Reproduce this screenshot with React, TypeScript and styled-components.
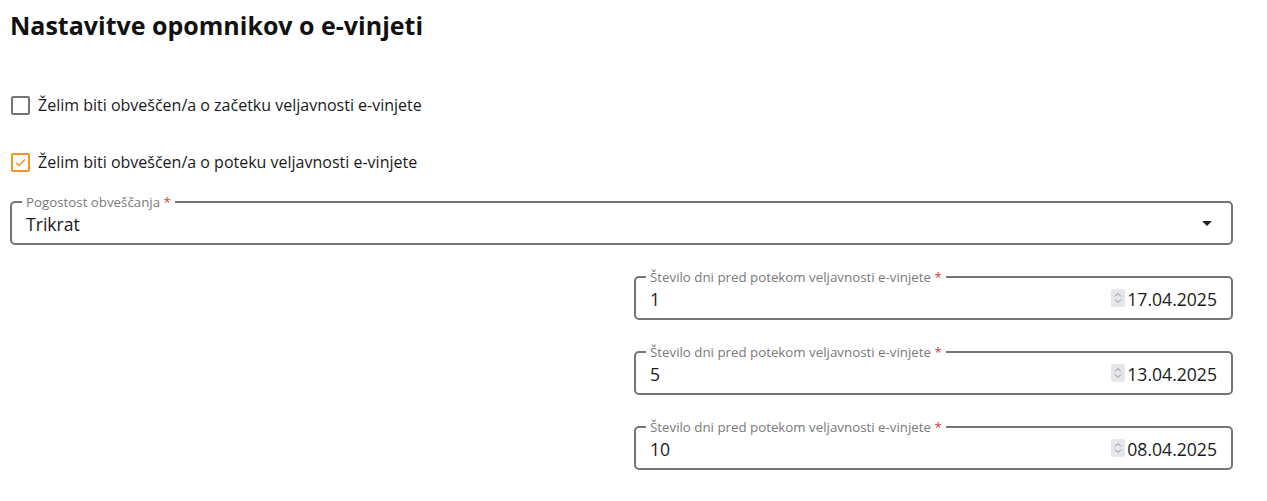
import React from 'react';
import styled, { createGlobalStyle } from 'styled-components';

const GlobalStyle = createGlobalStyle`
	html, body {
		margin: 0;
		padding: 0;
		background: #ffffff;
		font-family: 'Open Sans', 'Noto Sans', sans-serif;
		color: #1a1a1a;
	}
`;

const Page = styled.div`
	width: 1223px;
	padding: 8px 34px 20px 10px;
	display: flex;
	flex-direction: column;
`;

const Title = styled.h1`
	margin: 0;
	font-size: 25px;
	line-height: 34px;
	font-weight: 700;
	color: #111;
`;

const CheckRow = styled.label<{ top: number }>`
	display: flex;
	align-items: center;
	gap: 8px;
	height: 24px;
	margin-top: ${({ top }) => top}px;
	margin-left: 1px;
	font-size: 16px;
	line-height: 24px;
	color: #1a1a1a;
	cursor: pointer;
`;

const Box = styled.span<{ checked: boolean }>`
	box-sizing: border-box;
	width: 19px;
	height: 19px;
	border: 2px solid ${({ checked }) => (checked ? '#f7941d' : '#757575')};
	border-radius: 2px;
	display: flex;
	align-items: center;
	justify-content: center;
`;

const Fields = styled.div`
	margin-top: 27px;
	display: flex;
	flex-direction: column;
	align-items: flex-end;
	gap: 31px;
`;

const Field = styled.div<{ width?: number }>`
	position: relative;
	box-sizing: border-box;
	width: ${({ width }) => (width ? `${width}px` : '100%')};
	height: 44px;
	border: 2px solid #757575;
	border-radius: 5px;
	display: flex;
	align-items: center;
	padding: 0 14px 0 14px;
`;

const FieldLabel = styled.span`
	position: absolute;
	top: -10px;
	left: 10px;
	padding: 0 4px;
	background: #ffffff;
	font-size: 13.3px;
	line-height: 18px;
	color: #7a7a7a;
	white-space: nowrap;
`;

const Required = styled.span`
	color: #e53935;
`;

const Value = styled.span`
	flex: 1;
	font-size: 17.6px;
	line-height: 24px;
	color: #1a1a1a;
	padding-top: 2px;
`;

const Arrow = styled.span`
	width: 0;
	height: 0;
	border-left: 5px solid transparent;
	border-right: 5px solid transparent;
	border-top: 5px solid #222;
	margin-right: 5px;
`;

const Spinner = styled.span`
	width: 14px;
	height: 18px;
	background: #e6e6ea;
	border-radius: 2px;
	display: flex;
	align-items: center;
	justify-content: center;
	margin-right: 2px;
`;

const DateText = styled.span`
	font-size: 17.6px;
	line-height: 24px;
	color: #1a1a1a;
	padding-top: 2px;
`;

const reminders = [
	{ days: '1', date: '17.04.2025' },
	{ days: '5', date: '13.04.2025' },
	{ days: '10', date: '08.04.2025' },
];

function CheckMark(): JSX.Element {
	return (
		<svg width="13" height="13" viewBox="0 0 13 13">
			<path d="M2 6.8 L5 9.6 L11 3.4" fill="none" stroke="#f7941d" strokeWidth="1.4" />
		</svg>
	);
}

function SpinIcon(): JSX.Element {
	return (
		<svg width="10" height="16" viewBox="0 0 10 16">
			<path d="M2 6.5 L5 3.5 L8 6.5" fill="none" stroke="#8e8e96" strokeWidth="1" />
			<path d="M2 9.5 L5 12.5 L8 9.5" fill="none" stroke="#8e8e96" strokeWidth="1" />
		</svg>
	);
}

export default function App(): JSX.Element {
	const label = 'Število dni pred potekom veljavnosti e-vinjete';

	return (
		<Page>
			<GlobalStyle />
			<Title>Nastavitve opomnikov o e-vinjeti</Title>

			<CheckRow top={51}>
				<Box checked={false} />
				Želim biti obveščen/a o začetku veljavnosti e-vinjete
			</CheckRow>
			<CheckRow top={33}>
				<Box checked>
					<CheckMark />
				</Box>
				Želim biti obveščen/a o poteku veljavnosti e-vinjete
			</CheckRow>

			<Fields>
				<Field>
					<FieldLabel>
						Pogostost obveščanja <Required>*</Required>
					</FieldLabel>
					<Value>Trikrat</Value>
					<Arrow />
				</Field>
				{reminders.map((r) => (
					<Field key={r.date} width={599}>
						<FieldLabel>
							{label} <Required>*</Required>
						</FieldLabel>
						<Value>{r.days}</Value>
						<Spinner>
							<SpinIcon />
						</Spinner>
						<DateText>{r.date}</DateText>
					</Field>
				))}
			</Fields>
		</Page>
	);
}
